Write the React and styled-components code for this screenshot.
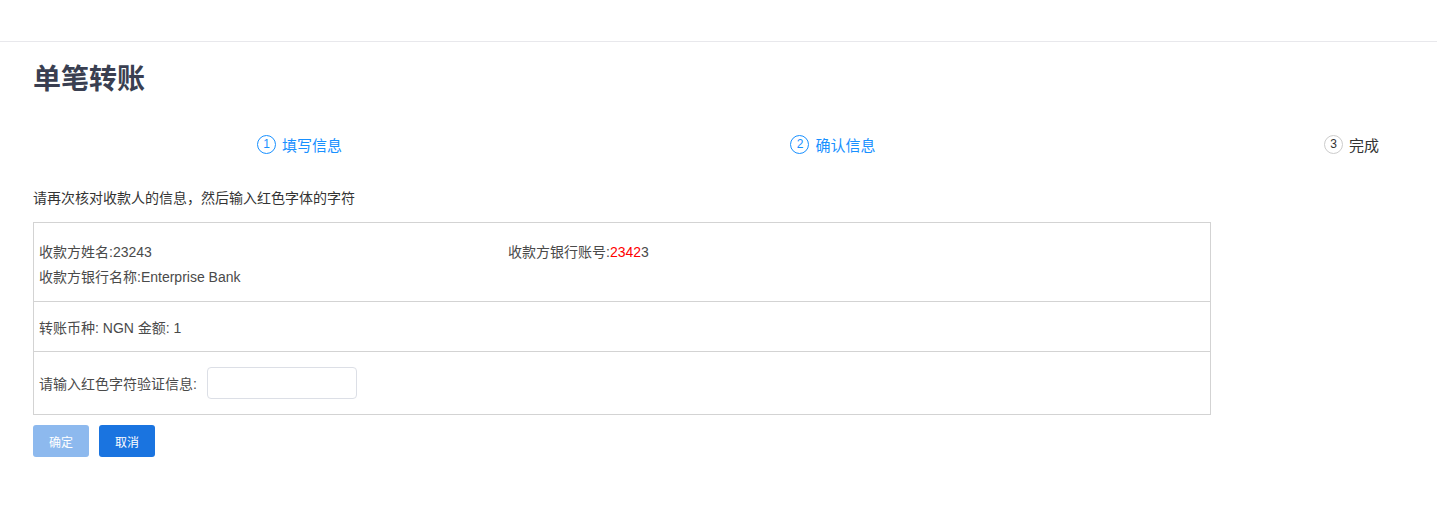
import React from 'react'
import styled, {createGlobalStyle} from 'styled-components'

const GlobalStyle = createGlobalStyle`
    body {
        margin: 0;
        background: #fff;
        font-family: "Liberation Sans", Arial, "Noto Sans CJK SC", sans-serif;
        color: #333;
    }
`;

const steps = [
    {num: 1, label: '填写信息', active: true},
    {num: 2, label: '确认信息', active: true},
    {num: 3, label: '完成', active: false},
];

class App extends React.Component {
    render() {
        return (
            <Page>
                <GlobalStyle/>
                <TopBar/>
                <Main>
                    <Title>单笔转账</Title>
                    <Steps>
                        {steps.map(s => (
                            <Step key={s.num} active={s.active}>
                                <StepNum active={s.active}>{s.num}</StepNum>
                                <span>{s.label}</span>
                            </Step>
                        ))}
                    </Steps>
                    <Hint>请再次核对收款人的信息，然后输入红色字体的字符</Hint>
                    <InfoTable>
                        <PayeeRow>
                            <Field>收款方姓名:23243</Field>
                            <Field>收款方银行账号:<Red>2342</Red>3</Field>
                            <Field>收款方银行名称:Enterprise Bank</Field>
                        </PayeeRow>
                        <Row height={49}>转账币种: NGN 金额: 1</Row>
                        <Row height={62}>
                            请输入红色字符验证信息:
                            <CodeInput type="text"/>
                        </Row>
                    </InfoTable>
                    <Actions>
                        <Button disabled>确定</Button>
                        <Button>取消</Button>
                    </Actions>
                </Main>
            </Page>
        );
    }
}

export default App

const Page = styled.div`
    min-height: 532px;
`;

const TopBar = styled.header`
    height: 41px;
    border-bottom: 1px solid #e8e8ec;
`;

const Main = styled.main`
    padding: 0 33px;
`;

const Title = styled.h1`
    margin: 18px 0 0;
    font-size: 28px;
    line-height: 40px;
    font-weight: 700;
    color: #3a3f51;
`;

const Steps = styled.div`
    display: flex;
    justify-content: space-between;
    margin: 32px 25px 0 224px;
    height: 24px;
    align-items: center;
`;

const Step = styled.div`
    display: flex;
    align-items: center;
    gap: 6px;
    font-size: 15px;
    color: ${p => p.active ? '#1890ff' : '#333'};
`;

const StepNum = styled.span`
    box-sizing: border-box;
    width: 19px;
    height: 19px;
    border-radius: 50%;
    border: 1px solid ${p => p.active ? '#1890ff' : '#ccc'};
    display: flex;
    align-items: center;
    justify-content: center;
    font-size: 12px;
    color: ${p => p.active ? '#1890ff' : '#333'};
`;

const Hint = styled.p`
    margin: 32px 0 0;
    font-size: 14px;
    line-height: 20px;
    color: #333;
`;

const InfoTable = styled.div`
    margin-top: 14px;
    width: 1178px;
    box-sizing: border-box;
    border: 1px solid #d3d3d3;
    font-size: 14px;
    color: #4a4a4a;
`;

const PayeeRow = styled.div`
    display: grid;
    grid-template-columns: 469px 1fr;
    padding: 17px 5px 11px;
    line-height: 25px;
`;

const Field = styled.div`
    white-space: nowrap;
`;

const Red = styled.span`
    color: #ff0000;
`;

const Row = styled.div`
    display: flex;
    align-items: center;
    height: ${p => p.height}px;
    padding: 0 5px;
    border-top: 1px solid #d3d3d3;
`;

const CodeInput = styled.input`
    box-sizing: border-box;
    margin-left: 10px;
    width: 150px;
    height: 32px;
    border: 1px solid #dcdfe6;
    border-radius: 4px;
    outline: none;
    padding: 0 8px;
`;

const Actions = styled.div`
    display: flex;
    gap: 10px;
    margin-top: 10px;
`;

const Button = styled.button`
    width: 56px;
    height: 32px;
    border: none;
    border-radius: 3px;
    font-size: 12px;
    font-family: inherit;
    color: #fff;
    background: #1a74e0;
    cursor: pointer;

    &:disabled {
        background: #8db9ee;
        cursor: not-allowed;
    }
`;
